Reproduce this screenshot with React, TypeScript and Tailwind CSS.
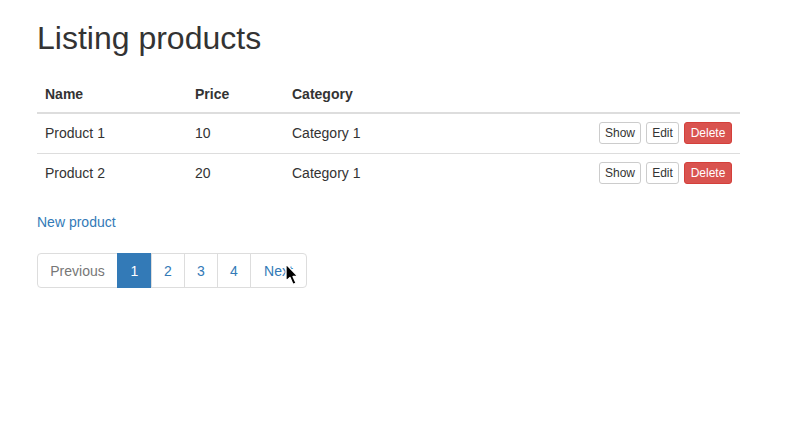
const products = [
  { name: 'Product 1', price: 10, category: 'Category 1' },
  { name: 'Product 2', price: 20, category: 'Category 1' },
];

const pages = ['1', '2', '3', '4'];

function Cursor() {
  return (
    <svg
      className="absolute left-[285px] top-[263px] w-[16px] h-[24px]"
      viewBox="0 0 16 24"
    >
      <path
        d="M1 1 L1 18 L5 14.5 L8 21.5 L11 20 L8 13.5 L13 13.5 Z"
        fill="#000"
        stroke="#fff"
        strokeWidth={1.3}
        strokeLinejoin="round"
      />
    </svg>
  );
}

export default function App() {
  return (
    <div className="relative min-h-[425px] bg-white text-[14px] leading-[20px] text-[#333] font-['Liberation_Sans',Arial,sans-serif]">
      <div className="pl-[37px] pr-[60px] pt-[21px]">
        <h1 className="text-[32px] leading-[35px] font-medium mb-[20px]">Listing products</h1>

        {/* Table */}
        <table className="w-[703px] border-collapse mb-[19px]">
          <thead>
            <tr className="border-b-2 border-[#ddd]">
              <th className="w-[150px] p-[8px] text-left font-bold">Name</th>
              <th className="w-[97px] p-[8px] text-left font-bold">Price</th>
              <th className="p-[8px] text-left font-bold">Category</th>
              <th className="p-[8px]"></th>
            </tr>
          </thead>
          <tbody>
            {products.map((p) => (
              <tr key={p.name} className="border-t border-[#ddd] h-[40px] first:border-t-0">
                <td className="px-[8px] py-[8px]">{p.name}</td>
                <td className="px-[8px] py-[8px]">{p.price}</td>
                <td className="px-[8px] py-[8px]">{p.category}</td>
                <td className="px-[8px] py-[8px]">
                  <div className="flex justify-end gap-[5px] text-[12px] leading-[18px]">
                    <button className="w-[42px] py-[1px] border border-[#ccc] rounded-[3px] bg-white text-[#333]">
                      Show
                    </button>
                    <button className="w-[33px] py-[1px] border border-[#ccc] rounded-[3px] bg-white text-[#333]">
                      Edit
                    </button>
                    <button className="w-[48px] py-[1px] border border-[#d43f3a] rounded-[3px] bg-[#d9534f] text-white">
                      Delete
                    </button>
                  </div>
                </td>
              </tr>
            ))}
          </tbody>
        </table>

        <a href="#" className="text-[#337ab7]">New product</a>

        {/* Pagination */}
        <nav className="mt-[21px] flex h-[35px]">
          <span className="w-[81px] flex items-center justify-center border border-[#ddd] rounded-l-[4px] text-[#777] bg-white">
            Previous
          </span>
          {pages.map((n) => (
            <span
              key={n}
              className={
                n === '1'
                  ? 'w-[35px] flex items-center justify-center -ml-px border border-[#337ab7] bg-[#337ab7] text-white'
                  : 'w-[34px] flex items-center justify-center -ml-px border border-[#ddd] bg-white text-[#337ab7]'
              }
            >
              {n}
            </span>
          ))}
          <span className="w-[57px] flex items-center justify-center -ml-px border border-[#ddd] rounded-r-[4px] text-[#337ab7] bg-white">
            Next
          </span>
        </nav>
      </div>

      <Cursor />
    </div>
  );
}
